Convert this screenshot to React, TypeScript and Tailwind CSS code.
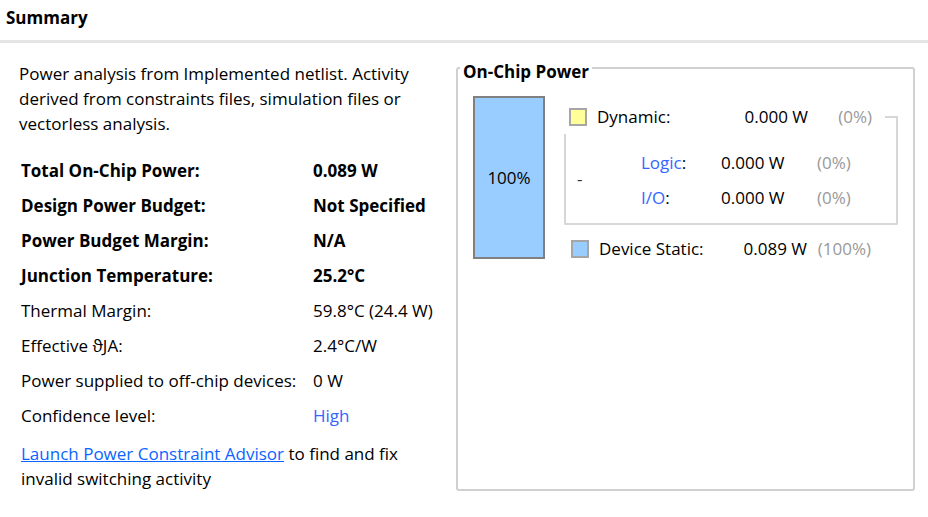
import React from 'react';

const font = { fontFamily: '"Open Sans", "Noto Sans", sans-serif' };

type Row = { label: string; value: string; bold?: boolean; blue?: boolean };

const rows: Row[] = [
  { label: 'Total On-Chip Power:', value: '0.089 W', bold: true },
  { label: 'Design Power Budget:', value: 'Not Specified', bold: true },
  { label: 'Power Budget Margin:', value: 'N/A', bold: true },
  { label: 'Junction Temperature:', value: '25.2°C', bold: true },
  { label: 'Thermal Margin:', value: '59.8°C (24.4 W)' },
  { label: 'Effective \u03D1JA:', value: '2.4°C/W' },
  { label: 'Power supplied to off-chip devices:', value: '0 W' },
  { label: 'Confidence level:', value: 'High', blue: true },
];

const Swatch = ({ color }: { color: string }) => (
  <div className={`w-[18px] h-[18px] border-2 border-[#a6a6a6] shrink-0 ${color}`} />
);

const SummaryTable = () => (
  <div className="w-[456px] shrink-0">
    <p className="pl-[19px] pt-[18px] text-[17px] leading-[25px] text-black">
      Power analysis from Implemented netlist. Activity
      <br />
      derived from constraints files, simulation files or
      <br />
      vectorless analysis.
    </p>
    <div className="pl-[21px] mt-[17px]">
      {rows.map((r) => (
        <div key={r.label} className="flex h-[35px] items-center text-[17px]">
          <span className={`w-[292px] ${r.bold ? 'font-bold' : ''}`}>{r.label}</span>
          <span className={`${r.bold ? 'font-bold' : ''} ${r.blue ? 'text-[#3366ff]' : ''}`}>
            {r.value}
          </span>
        </div>
      ))}
    </div>
    <p className="pl-[21px] mt-[8px] text-[17px] leading-[25px]">
      <a href="#" className="text-[#0a64ff] underline">Launch Power Constraint Advisor</a> to find and fix
      <br />
      invalid switching activity
    </p>
  </div>
);

const OnChipPower = () => (
  <fieldset className="w-[457px] h-[435px] border-2 border-[#d0d0d0] rounded-[3px] px-[15px] pt-[16px]">
    <legend className="-ml-[13px] px-[3px] pt-[8px] leading-4 text-[17px] font-bold">On-Chip Power</legend>
    <div className="flex">
      <div className="w-[72px] h-[163px] bg-[#99ccff] border-2 border-[#808080] flex items-center justify-center text-[17px] shrink-0">
        100%
      </div>
      <div className="ml-[19px] w-[334px] mt-[12px] text-[17px]">
        <div className="flex items-start h-[26px]">
          <div className="flex items-center h-[18px] pl-[5px]">
            <Swatch color="bg-[#ffff99]" />
            <span className="ml-[10px] w-[124px]">Dynamic:</span>
            <span className="w-[87px] text-right">0.000 W</span>
            <span className="w-[64px] text-right text-[#999999]">(0%)</span>
          </div>
          <div className="ml-auto mt-[8px] w-[13px] h-[18px] border-t-2 border-r-2 border-[#d7d7d7]" />
        </div>
        <div className="h-[91px] border-l-2 border-r-2 border-b-2 border-[#d7d7d7] rounded-b-[2px] flex items-center">
          <span className="ml-[11px] w-[64px] text-[#333333]">-</span>
          <div className="flex flex-col gap-[11px] pt-[3px]">
            <div className="flex leading-6">
              <span className="w-[80px]"><span className="text-[#3366ff]">Logic</span>:</span>
              <span className="w-[96px]">0.000 W</span>
              <span className="text-[#999999]">(0%)</span>
            </div>
            <div className="flex leading-6">
              <span className="w-[80px]"><span className="text-[#3366ff]">I/O</span>:</span>
              <span className="w-[96px]">0.000 W</span>
              <span className="text-[#999999]">(0%)</span>
            </div>
          </div>
        </div>
        <div className="flex items-center h-[18px] mt-[15px] pl-[7px]">
          <Swatch color="bg-[#99ccff]" />
          <span className="ml-[10px] w-[120px]">Device Static:</span>
          <span className="w-[88px] text-right">0.089 W</span>
          <span className="w-[64px] text-right text-[#999999]">(100%)</span>
        </div>
      </div>
    </div>
  </fieldset>
);

export default function App() {
  return (
    <div className="w-[928px] h-[517px] bg-white text-black overflow-hidden" style={font}>
      <div className="h-[43px] border-b-[3px] border-[#e5e5e5] flex items-center pl-[6px] pb-[4px]">
        <h1 className="text-[17px] font-bold">Summary</h1>
      </div>
      <div className="flex">
        <SummaryTable />
        <div className="pt-[13px]">
          <OnChipPower />
        </div>
      </div>
    </div>
  );
}
